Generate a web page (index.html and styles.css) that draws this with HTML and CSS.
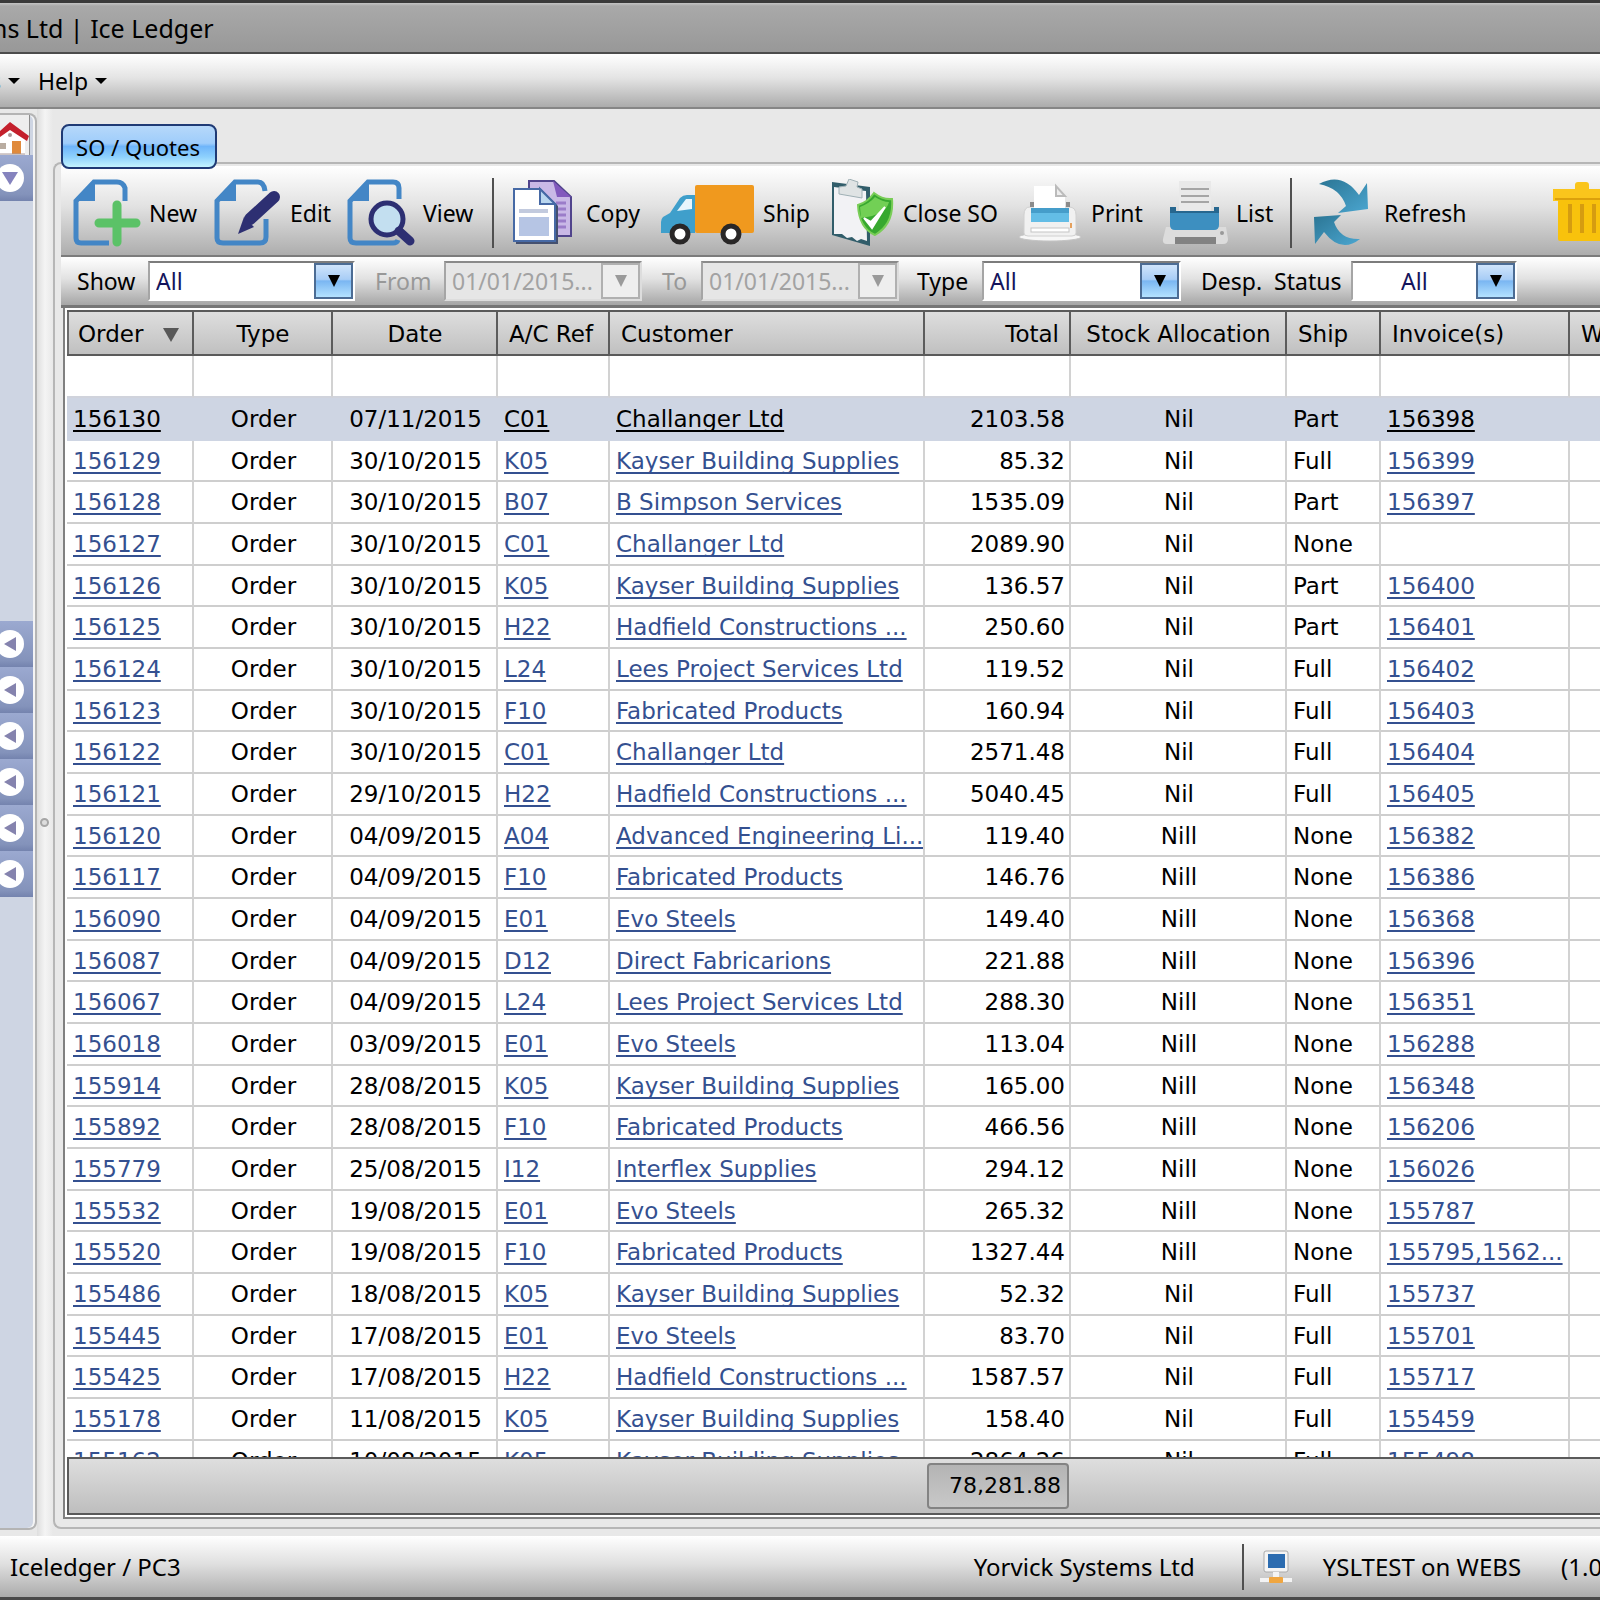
FILE: index.html
```html
<!DOCTYPE html>
<html lang="en">
<head>
<meta charset="utf-8">
<title>Ice Ledger</title>
<link rel="stylesheet" href="styles.css">
</head>
<body>
<header class="titlebar"><span class="titlebar-text">ms Ltd | Ice Ledger</span></header>
<nav class="menubar">
  <button class="menu-item" type="button">s<span class="caret"></span></button>
  <button class="menu-item" type="button">Help<span class="caret"></span></button>
</nav>

<div class="workspace">
  <aside class="sidebar">
    <a class="home" href="#" aria-label="Home">
      <svg width="30" height="36" viewBox="0 0 30 36">
        <path d="M0 17 10 8 25 20V35H0Z" fill="#fff"/>
        <path d="M0 12 10 3 29 17 27 22 10 11 0 18Z" fill="#c4202c"/>
        <path d="M12 22H21V35H12Z" fill="#e08a3c"/>
        <path d="M0 24H6V30H0Z" fill="#b9aca0"/><circle cx="10" cy="16" r="2" fill="#a99"/>
        <path d="M0 35H25" stroke="#a99" stroke-width="1"/>
      </svg>
    </a>
    <button class="section open" type="button" aria-label="Collapse section"><span class="disc"><span class="tri-down"></span></span></button>
    <div class="section-body"></div>
    <button class="section" type="button" aria-label="Expand section 1"><span class="disc"><span class="tri-left"></span></span></button>
    <button class="section" type="button" aria-label="Expand section 2"><span class="disc"><span class="tri-left"></span></span></button>
    <button class="section" type="button" aria-label="Expand section 3"><span class="disc"><span class="tri-left"></span></span></button>
    <button class="section" type="button" aria-label="Expand section 4"><span class="disc"><span class="tri-left"></span></span></button>
    <button class="section" type="button" aria-label="Expand section 5"><span class="disc"><span class="tri-left"></span></span></button>
    <button class="section" type="button" aria-label="Expand section 6"><span class="disc"><span class="tri-left"></span></span></button>
  </aside>
  <div class="splitter"><span class="grip"></span></div>

  <main class="content">
    <div class="tabs"><button class="tab" type="button">SO / Quotes</button></div>
    <section class="panel">
      <div class="toolbar">
        <button class="tool" type="button">
          <svg width="68" height="68" viewBox="0 0 68 68">
            <path d="M36 64H8Q3 64 3 59V22L21 3H44Q50 3 52 9V22" fill="none" stroke="#4386c6" stroke-width="5"/>
            <path d="M1 22 22 1V22Z" fill="#4386c6"/>
            <path d="M44 26V63M26 44H63" stroke="#5bc267" stroke-width="9" stroke-linecap="round"/>
          </svg>New</button>
        <button class="tool" type="button">
          <svg width="68" height="68" viewBox="0 0 68 68">
            <path d="M52 40V58Q52 64 46 64H9Q3 64 3 59V22L21 3H44Q50 3 51 12" fill="none" stroke="#4386c6" stroke-width="5"/>
            <path d="M1 22 22 1V22Z" fill="#4386c6"/>
            <path d="M36 40 60 18" stroke="#2d2f72" stroke-width="12" stroke-linecap="round"/>
            <path d="M30 38 40 48 24 55Z" fill="#2d2f72"/>
          </svg>Edit</button>
        <button class="tool" type="button">
          <svg width="68" height="68" viewBox="0 0 68 68">
            <path d="M51 61Q50 64 46 64H9Q3 64 3 59V22L21 3H46Q52 3 52 9V20" fill="none" stroke="#4386c6" stroke-width="5"/>
            <path d="M1 22 22 1V22Z" fill="#4386c6"/>
            <circle cx="40" cy="40" r="16" fill="#c3dff0" stroke="#2d2f72" stroke-width="5"/>
            <path d="M52 52 63 62" stroke="#2d2f72" stroke-width="9" stroke-linecap="round"/>
          </svg>View</button>
        <span class="divider"></span>
        <button class="tool" type="button">
          <svg width="66" height="68" viewBox="0 0 66 68">
            <path d="M17 2H42L59 18V57H17Z" fill="#c9b8e6" stroke="#51448c" stroke-width="2"/>
            <path d="M41 2 59 18H45Z" fill="#8259bd"/>
            <path d="M44 24H54M44 30H54M44 36H54M44 42H54M44 48H54" stroke="#9b7cc9" stroke-width="3"/>
            <path d="M4 12H30L46 27V65H4Z" fill="#44506f"/>
            <path d="M2 10H28L43 25V62H2Z" fill="#fff" stroke="#4669a5" stroke-width="2"/>
            <path d="M28 10 43 25H28Z" fill="#b9d6ef" stroke="#4669a5" stroke-width="2"/>
            <path d="M7 30H36V34H7Z" fill="#c2cade"/><path d="M7 38H37V57H7Z" fill="#b6c5e4"/>
          </svg>Copy</button>
        <button class="tool" type="button">
          <svg width="94" height="68" viewBox="0 0 94 68">
            <rect x="34" y="6" width="59" height="48" rx="2" fill="#f0991e"/>
            <path d="M34 16H26Q22 16 19 19L9 34 2 38Q0 40 0 43V54H34Z" fill="#3f9fcb"/>
            <path d="M31 20H25L16 32 31 30Z" fill="#e7f5fc"/>
            <circle cx="19" cy="55" r="8" fill="#fff" stroke="#292727" stroke-width="5"/>
            <circle cx="70" cy="55" r="8" fill="#fff" stroke="#292727" stroke-width="5"/>
          </svg>Ship</button>
        <button class="tool" type="button">
          <svg width="64" height="68" viewBox="0 0 64 68">
            <path d="M1 3 39 8V67L1 56Z" fill="#315d6a"/>
            <path d="M3 8 35 12 36 62 30 60 26 62 21 58 16 59 11 55 3 55Z" fill="#f2f2f5"/>
            <path d="M8 8 15 7 18 0 27 3 26 8 31 10V19L8 15Z" fill="#dfe3e4" stroke="#9fb0b5"/>
            <path d="M43 14Q52 21 61 20Q63 45 44 56Q28 49 27 26Q37 23 43 14Z" fill="#37a82f" stroke="#79cd57" stroke-width="2"/>
            <path d="M29 28Q39 24 44 18Q52 23 58 23Q55 36 30 39Z" fill="#72d055"/>
            <path d="M33 39 40 43 54 28 41 49Z" fill="#fff" stroke="#fff" stroke-width="2"/>
          </svg>Close SO</button>
        <button class="tool" type="button">
          <svg width="64" height="68" viewBox="0 0 64 68">
            <ellipse cx="31" cy="58" rx="31" ry="4" fill="#f7f7f7" stroke="#c4c4c4"/>
            <path d="M11 28H50Q57 28 57 36V54Q57 57 53 57H9Q5 57 5 54V36Q5 28 11 28Z" fill="#f1f1f1" stroke="#d0d0d0"/>
            <path d="M11 23H15V28H11ZM47 23H51V28H47Z" fill="#8b8b8b"/>
            <path d="M15 7H37L46 17V34H15Z" fill="#fff"/>
            <path d="M37 7V17H46Z" fill="#eee" stroke="#bbb" stroke-width="2"/>
            <path d="M12 29H50V43H12Z" fill="#63bde6"/><path d="M12 29H50V34H12Z" fill="#459dca"/>
            <rect x="12" y="49" width="38" height="4" fill="#fff" stroke="#c5c5c5"/>
            <path d="M52 44V49" stroke="#e5a15e" stroke-width="2"/>
          </svg>Print</button>
        <button class="tool" type="button">
          <svg width="67" height="68" viewBox="0 0 67 68">
            <path d="M5 48H65L67 60Q67 65 62 65H6Q1 65 2 60Z" fill="#dcdcdc"/>
            <path d="M18 2H50V35H18Z" fill="#e9e9e9"/>
            <path d="M20 10H48M20 17H48M20 23H48" stroke="#a5a5a5" stroke-width="2"/>
            <path d="M9 28H15V33H53V28H58V46Q58 51 53 51H14Q9 51 9 46Z" fill="#3d8fc0"/>
            <path d="M9 28H15V32H53V28H58V34H9Z" fill="#27678f"/>
            <path d="M14 58H55V65H14Z" fill="#828282"/><circle cx="61" cy="54" r="2" fill="#999"/>
          </svg>List</button>
        <span class="divider"></span>
        <button class="tool" type="button">
          <svg width="62" height="68" viewBox="0 0 62 68">
            <defs><linearGradient id="arrow" x1="0" y1="0" x2="1" y2="1"><stop offset="0" stop-color="#2b7594"/><stop offset="1" stop-color="#4ba6d0"/></linearGradient></defs>
            <path d="M5 5Q28-8 45 16L53 4 54 30 24 34 32 27Q26 9 5 5Z" fill="url(#arrow)"/>
            <path d="M0 38 27 36 20 43Q26 61 46 60Q27 75 10 53L1 65Z" fill="url(#arrow)"/>
          </svg>Refresh</button>
        <button class="tool" type="button" aria-label="Delete">
          <svg width="68" height="68" viewBox="0 0 68 68">
            <path d="M22 6Q22 3 25 3H33Q36 3 36 6V10H60V22H0V10H22Z" fill="#fac51c"/>
            <path d="M5 20H54V60Q54 62 52 62H7Q5 62 5 60Z" fill="#f8c20c"/>
            <path d="M2 20H58" stroke="#dca00b" stroke-width="2"/>
            <path d="M17 25V54M29 25V54M41 25V54" stroke="#d59c10" stroke-width="4"/>
          </svg></button>
      </div>

      <form class="filters">
        <label for="show">Show</label>
        <span class="combo combo-show"><select id="show"><option>All</option></select></span>
        <label class="off" for="from">From</label>
        <span class="combo combo-date off"><input id="from" type="text" value="01/01/2015..." disabled></span>
        <label class="off" for="to">To</label>
        <span class="combo combo-date off"><input id="to" type="text" value="01/01/2015..." disabled></span>
        <label for="type">Type</label>
        <span class="combo combo-type"><select id="type"><option>All</option></select></span>
        <label for="status">Desp.&nbsp; Status</label>
        <span class="combo combo-status"><select id="status"><option>All</option></select></span>
      </form>

      <div class="grid">
        <div class="grid-view">
          <table class="orders">
            <colgroup><col class="c-order"><col class="c-type"><col class="c-date"><col class="c-ref"><col class="c-customer"><col class="c-total"><col class="c-stock"><col class="c-ship"><col class="c-invoice"><col></colgroup>
            <thead>
              <tr><th class="sorted">Order<span class="sort"></span></th><th class="mid">Type</th><th class="mid">Date</th><th>A/C Ref</th><th>Customer</th><th class="num">Total</th><th class="mid">Stock Allocation</th><th>Ship</th><th>Invoice(s)</th><th>W</th></tr>
            </thead>
            <tbody>
              <tr class="blank"><td></td><td></td><td></td><td></td><td></td><td></td><td></td><td></td><td></td><td></td></tr>
              <tr class="selected"><td><a href="#">156130</a></td><td>Order</td><td>07/11/2015</td><td><a href="#">C01</a></td><td><a href="#">Challanger Ltd</a></td><td>2103.58</td><td>Nil</td><td>Part</td><td><a href="#">156398</a></td><td></td></tr>
              <tr><td><a href="#">156129</a></td><td>Order</td><td>30/10/2015</td><td><a href="#">K05</a></td><td><a href="#">Kayser Building Supplies</a></td><td>85.32</td><td>Nil</td><td>Full</td><td><a href="#">156399</a></td><td></td></tr>
              <tr><td><a href="#">156128</a></td><td>Order</td><td>30/10/2015</td><td><a href="#">B07</a></td><td><a href="#">B Simpson Services</a></td><td>1535.09</td><td>Nil</td><td>Part</td><td><a href="#">156397</a></td><td></td></tr>
              <tr><td><a href="#">156127</a></td><td>Order</td><td>30/10/2015</td><td><a href="#">C01</a></td><td><a href="#">Challanger Ltd</a></td><td>2089.90</td><td>Nil</td><td>None</td><td></td><td></td></tr>
              <tr><td><a href="#">156126</a></td><td>Order</td><td>30/10/2015</td><td><a href="#">K05</a></td><td><a href="#">Kayser Building Supplies</a></td><td>136.57</td><td>Nil</td><td>Part</td><td><a href="#">156400</a></td><td></td></tr>
              <tr><td><a href="#">156125</a></td><td>Order</td><td>30/10/2015</td><td><a href="#">H22</a></td><td><a href="#">Hadfield Constructions ...</a></td><td>250.60</td><td>Nil</td><td>Part</td><td><a href="#">156401</a></td><td></td></tr>
              <tr><td><a href="#">156124</a></td><td>Order</td><td>30/10/2015</td><td><a href="#">L24</a></td><td><a href="#">Lees Project Services Ltd</a></td><td>119.52</td><td>Nil</td><td>Full</td><td><a href="#">156402</a></td><td></td></tr>
              <tr><td><a href="#">156123</a></td><td>Order</td><td>30/10/2015</td><td><a href="#">F10</a></td><td><a href="#">Fabricated Products</a></td><td>160.94</td><td>Nil</td><td>Full</td><td><a href="#">156403</a></td><td></td></tr>
              <tr><td><a href="#">156122</a></td><td>Order</td><td>30/10/2015</td><td><a href="#">C01</a></td><td><a href="#">Challanger Ltd</a></td><td>2571.48</td><td>Nil</td><td>Full</td><td><a href="#">156404</a></td><td></td></tr>
              <tr><td><a href="#">156121</a></td><td>Order</td><td>29/10/2015</td><td><a href="#">H22</a></td><td><a href="#">Hadfield Constructions ...</a></td><td>5040.45</td><td>Nil</td><td>Full</td><td><a href="#">156405</a></td><td></td></tr>
              <tr><td><a href="#">156120</a></td><td>Order</td><td>04/09/2015</td><td><a href="#">A04</a></td><td><a href="#">Advanced Engineering Li...</a></td><td>119.40</td><td>Nill</td><td>None</td><td><a href="#">156382</a></td><td></td></tr>
              <tr><td><a href="#">156117</a></td><td>Order</td><td>04/09/2015</td><td><a href="#">F10</a></td><td><a href="#">Fabricated Products</a></td><td>146.76</td><td>Nill</td><td>None</td><td><a href="#">156386</a></td><td></td></tr>
              <tr><td><a href="#">156090</a></td><td>Order</td><td>04/09/2015</td><td><a href="#">E01</a></td><td><a href="#">Evo Steels</a></td><td>149.40</td><td>Nill</td><td>None</td><td><a href="#">156368</a></td><td></td></tr>
              <tr><td><a href="#">156087</a></td><td>Order</td><td>04/09/2015</td><td><a href="#">D12</a></td><td><a href="#">Direct Fabricarions</a></td><td>221.88</td><td>Nill</td><td>None</td><td><a href="#">156396</a></td><td></td></tr>
              <tr><td><a href="#">156067</a></td><td>Order</td><td>04/09/2015</td><td><a href="#">L24</a></td><td><a href="#">Lees Project Services Ltd</a></td><td>288.30</td><td>Nill</td><td>None</td><td><a href="#">156351</a></td><td></td></tr>
              <tr><td><a href="#">156018</a></td><td>Order</td><td>03/09/2015</td><td><a href="#">E01</a></td><td><a href="#">Evo Steels</a></td><td>113.04</td><td>Nill</td><td>None</td><td><a href="#">156288</a></td><td></td></tr>
              <tr><td><a href="#">155914</a></td><td>Order</td><td>28/08/2015</td><td><a href="#">K05</a></td><td><a href="#">Kayser Building Supplies</a></td><td>165.00</td><td>Nill</td><td>None</td><td><a href="#">156348</a></td><td></td></tr>
              <tr><td><a href="#">155892</a></td><td>Order</td><td>28/08/2015</td><td><a href="#">F10</a></td><td><a href="#">Fabricated Products</a></td><td>466.56</td><td>Nill</td><td>None</td><td><a href="#">156206</a></td><td></td></tr>
              <tr><td><a href="#">155779</a></td><td>Order</td><td>25/08/2015</td><td><a href="#">I12</a></td><td><a href="#">Interflex Supplies</a></td><td>294.12</td><td>Nill</td><td>None</td><td><a href="#">156026</a></td><td></td></tr>
              <tr><td><a href="#">155532</a></td><td>Order</td><td>19/08/2015</td><td><a href="#">E01</a></td><td><a href="#">Evo Steels</a></td><td>265.32</td><td>Nill</td><td>None</td><td><a href="#">155787</a></td><td></td></tr>
              <tr><td><a href="#">155520</a></td><td>Order</td><td>19/08/2015</td><td><a href="#">F10</a></td><td><a href="#">Fabricated Products</a></td><td>1327.44</td><td>Nill</td><td>None</td><td><a href="#">155795,1562...</a></td><td></td></tr>
              <tr><td><a href="#">155486</a></td><td>Order</td><td>18/08/2015</td><td><a href="#">K05</a></td><td><a href="#">Kayser Building Supplies</a></td><td>52.32</td><td>Nil</td><td>Full</td><td><a href="#">155737</a></td><td></td></tr>
              <tr><td><a href="#">155445</a></td><td>Order</td><td>17/08/2015</td><td><a href="#">E01</a></td><td><a href="#">Evo Steels</a></td><td>83.70</td><td>Nil</td><td>Full</td><td><a href="#">155701</a></td><td></td></tr>
              <tr><td><a href="#">155425</a></td><td>Order</td><td>17/08/2015</td><td><a href="#">H22</a></td><td><a href="#">Hadfield Constructions ...</a></td><td>1587.57</td><td>Nil</td><td>Full</td><td><a href="#">155717</a></td><td></td></tr>
              <tr><td><a href="#">155178</a></td><td>Order</td><td>11/08/2015</td><td><a href="#">K05</a></td><td><a href="#">Kayser Building Supplies</a></td><td>158.40</td><td>Nil</td><td>Full</td><td><a href="#">155459</a></td><td></td></tr>
              <tr><td><a href="#">155162</a></td><td>Order</td><td>10/08/2015</td><td><a href="#">K05</a></td><td><a href="#">Kayser Building Supplies</a></td><td>2864.26</td><td>Nil</td><td>Full</td><td><a href="#">155498</a></td><td></td></tr>
            </tbody>
          </table>
        </div>
        <div class="totals"><output class="sum">78,281.88</output></div>
      </div>
    </section>
  </main>
</div>

<footer class="statusbar">
  <span>Iceledger / PC3</span>
  <span class="company">Yorvick Systems Ltd</span>
  <span class="divider"></span>
  <svg class="network" width="32" height="36" viewBox="0 0 32 36">
    <rect x="4" y="2" width="24" height="21" rx="2" fill="#f4f4f4" stroke="#aaa"/>
    <rect x="8" y="5" width="17" height="14" fill="#2c6cb0"/>
    <path d="M13 23H19V28H13Z" fill="#f4f4f4"/>
    <path d="M0 31H32" stroke="#f4f4f4" stroke-width="4"/>
    <rect x="9" y="28" width="14" height="6" rx="1" fill="#f0a640"/>
  </svg>
  <span class="server">YSLTEST on WEBS</span>
  <span>(1.0</span>
</footer>
</body>
</html>
```
FILE: styles.css
```css
*, *::before, *::after { box-sizing: border-box; }

body {
  margin: 0;
  height: 100vh;
  display: flex;
  flex-direction: column;
  overflow: hidden;
  background: #e8e8e8;
  color: #000;
  font: 23px/32px "Noto Sans", sans-serif;
  white-space: nowrap;
}

button, input, select {
  margin: 0;
  padding: 0;
  border: 0;
  background: none;
  color: inherit;
  font: inherit;
}

/* Window chrome */
.titlebar {
  flex: none;
  height: 54px;
  display: flex;
  align-items: center;
  border-top: 3px solid #3a3a3a;
  border-bottom: 2px solid #4c4c4c;
  background: linear-gradient(#c4c4c4 0, #a9a9a9 3px, #989898);
  font-size: 25px;
}
.titlebar-text { margin-left: -16px; }

.menubar {
  flex: none;
  height: 55px;
  display: flex;
  align-items: center;
  gap: 18px;
  border-bottom: 2px solid #868686;
  background: linear-gradient(#fff, #e4e4e4 45%, #acacac);
}
.menu-item { display: flex; align-items: center; gap: 7px; }
.menu-item:first-child { margin-left: -10px; }
.caret {
  border: 6px solid transparent;
  border-top-color: #000;
  border-bottom: 0;
}

/* Left side */
.workspace {
  flex: 1;
  min-height: 0;
  display: flex;
}
.sidebar {
  flex: none;
  width: 37px;
  margin: 4px 0 6px;
  padding-right: 2px;
  border: 2px solid #b4b4b4;
  border-left: 0;
  border-radius: 0 8px 8px 0;
  background: #ced5e3;
  box-shadow: inset -2px 0 #f4f4f4;
}
.home {
  display: block;
  width: 30px;
  height: 40px;
  padding-top: 4px;
  background: #eee;
  border-right: 1px solid #8c8c8c;
}
.section {
  display: flex;
  align-items: center;
  width: 33px;
  height: 46px;
  background: linear-gradient(#9ba9d0, #8493bb 85%, #7483ae);
}
.section-body { height: 420px; background: #ced5e3; }
.disc {
  display: flex;
  align-items: center;
  justify-content: center;
  width: 28px;
  height: 28px;
  margin-left: -4px;
  border-radius: 50%;
  background: #fff;
}
.tri-left {
  border: 7px solid transparent;
  border-right: 12px solid #8583ae;
  border-left: 0;
}
.tri-down {
  border: 8px solid transparent;
  border-top: 13px solid #8583be;
  border-bottom: 0;
}
.splitter {
  flex: none;
  width: 16px;
  display: flex;
  align-items: center;
  padding-left: 3px;
  background: linear-gradient(90deg, #dedede, #f4f4f4 50%, #e8e8e8);
}
.grip {
  width: 9px;
  height: 9px;
  border: 2px solid #a6a6a6;
  border-radius: 50%;
  background: #ddd;
}

/* Tab and panel */
.content {
  flex: 1;
  min-width: 0;
  display: flex;
  flex-direction: column;
  padding: 15px 0 7px;
}
.tabs {
  display: flex;
  height: 38px;
  padding-left: 8px;
  z-index: 1;
}
.tab {
  height: 45px;
  width: 156px;
  padding-right: 2px;
  border: 2px solid #1f3a75;
  border-radius: 8px;
  background: linear-gradient(#b6d8fa, #9fcdfb 42%, #6fb5fa 50%, #8dd0fd 75%, #c4f4ff);
  font-size: 22px;
  line-height: 38px;
}
.panel {
  flex: 1;
  min-height: 0;
  display: flex;
  flex-direction: column;
  padding: 2px 0 8px 6px;
  border: 2px solid #b6b6b6;
  border-right: 0;
  border-radius: 8px 0 0 8px;
}
.toolbar {
  flex: none;
  height: 91px;
  display: grid;
  grid-template-columns: 141px 133px 145px 20px 149px 170px 188px 142px 129px 24px 239px 68px;
  align-items: center;
  padding: 4px 0 0 12px;
  border-bottom: 2px solid #7c7c7c;
  background: linear-gradient(#fff, #e2e2e2 45%, #adadad);
  overflow: hidden;
}
.tool {
  display: flex;
  align-items: center;
  gap: 8px;
}
.tool svg { flex: none; }
.divider {
  width: 2px;
  height: 70px;
  background: #505050;
}
.filters {
  flex: none;
  height: 51px;
  display: grid;
  grid-template-columns: 71px 227px 69px 218px 39px 216px 65px 219px 150px 168px;
  align-items: center;
  padding-left: 16px;
  border-bottom: 3px solid #767676;
  background: linear-gradient(#fff, #e2e2e2 45%, #a6a6a6);
  overflow: hidden;
}
label.off { color: #989898; }
.combo {
  position: relative;
  height: 40px;
  border: 2px solid #fff;
  border-top-color: #7c7c7c;
  border-left-color: #a5a5a5;
  background: #fff;
}
.combo select, .combo input {
  appearance: none;
  display: block;
  width: 100%;
  height: 36px;
  padding-left: 6px;
}
.combo select { color: #14145c; }
.combo.off { background: #e6e6e6; border-color: #8a8a8a #ddd #ddd #a5a5a5; }
.combo.off input { color: #a2a2a2; }
.combo::before {
  content: "";
  position: absolute;
  top: 0;
  right: 0;
  width: 39px;
  height: 36px;
  border: 2px solid #4c6c94;
  background: linear-gradient(#cfe4fb, #a8cdf6 45%, #7ab6f2 50%, #b4e2ff);
  pointer-events: none;
}
.combo::after {
  content: "";
  position: absolute;
  top: 12px;
  right: 13px;
  border: 6px solid transparent;
  border-top: 12px solid #000;
  border-bottom: 0;
  pointer-events: none;
}
.combo.off::before { border-color: #b0b0b0; background: #eee; }
.combo.off::after { border-top-color: #9a9a9a; }
.combo-show { width: 207px; }
.combo-date { width: 198px; }
.combo-type { width: 199px; }
.combo-status { width: 166px; }
.combo-status select { padding-left: 48px; }

/* Data grid */
.grid {
  flex: 1;
  min-height: 0;
  display: flex;
  flex-direction: column;
  margin-left: 2px;
  padding: 2px 0 2px 2px;
  border: 2px solid #808080;
  border-top: 0;
  border-right: 0;
  background: #fff;
}
.grid-view {
  flex: 1;
  min-height: 0;
  overflow: hidden;
  border-top: 2px solid #5a5a5a;
}
.orders {
  width: 100%;
  table-layout: fixed;
  border-collapse: separate;
  border-spacing: 0;
  font: 23px/32px "DejaVu Sans", sans-serif;
}
.c-order { width: 127px; }
.c-type { width: 139px; }
.c-date { width: 165px; }
.c-ref { width: 112px; }
.c-customer { width: 315px; }
.c-total { width: 146px; }
.c-stock { width: 216px; }
.c-ship { width: 94px; }
.c-invoice { width: 189px; }

.orders th {
  height: 44px;
  padding: 2px 10px 0 11px;
  border-right: 2px solid #5c5c5c;
  border-bottom: 2px solid #5a5a5a;
  background: linear-gradient(#dedede, #c0c0c0);
  font-weight: 400;
  text-align: left;
}
.orders th:first-child { box-shadow: inset 2px 0 #6c6c6c; }
.orders th:last-child, .orders td:last-child { border-right: 0; }
.orders th.mid { text-align: center; }
.orders th.num { text-align: right; }
.sort {
  display: inline-block;
  margin-left: 20px;
  border: 8px solid transparent;
  border-top: 14px solid #585858;
  border-bottom: 0;
}
.orders td {
  height: 42px;
  padding: 0 4px 0 6px;
  border-right: 2px solid #d2d2d2;
  border-bottom: 2px solid #cecece;
  overflow: hidden;
}
.orders tr:nth-child(3n) td { height: 41px; }
.orders .blank td { height: 42px; border-bottom-color: #d0d3dc; }
.orders .selected td {
  height: 43px;
  border-color: #ced5e3;
  background: #ced5e3;
}
.orders td:nth-child(2), .orders td:nth-child(3), .orders td:nth-child(7) { text-align: center; }
.orders td:nth-child(6) { text-align: right; }
.orders a {
  color: #345090;
  text-decoration-thickness: 2px;
  text-underline-offset: 3px;
  text-decoration-skip-ink: none;
}
.orders .selected a { color: #000; }

.totals {
  flex: none;
  height: 58px;
  display: flex;
  align-items: center;
  padding-left: 858px;
  border: 2px solid #5a5a5a;
  border-right: 0;
  background: linear-gradient(#dedede, #bebebe);
}
.sum {
  width: 142px;
  height: 46px;
  padding-right: 6px;
  border: 2px solid #838383;
  border-radius: 4px;
  background: linear-gradient(#b4b4b4, #c8c8c8);
  font: 22px/42px "DejaVu Sans", sans-serif;
  text-align: right;
}

/* Status bar */
.statusbar {
  flex: none;
  height: 64px;
  display: flex;
  align-items: center;
  padding-left: 10px;
  border-bottom: 3px solid #4a4a4a;
  background: linear-gradient(#fff, #e0e0e0 45%, #ababab);
  font-size: 24px;
  overflow: hidden;
}
.statusbar .divider { flex: none; height: 46px; margin: 0 16px 0 48px; }
.company { width: 220px; margin-left: 793px; }
.network { flex: none; margin-right: 31px; }
.server { margin-right: 40px; }
```
